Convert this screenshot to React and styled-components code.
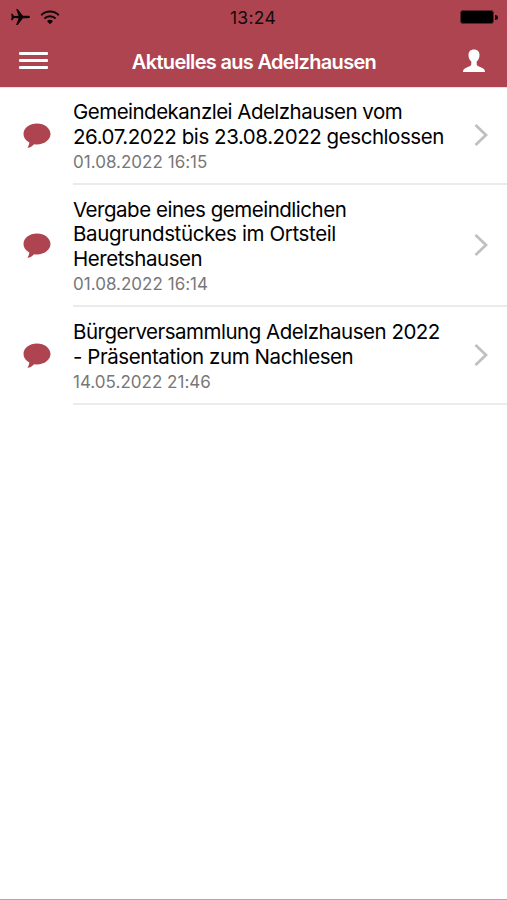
import styled, { createGlobalStyle } from "styled-components";

const news = [
  {
    lines: [
      { text: "Gemeindekanzlei Adelzhausen vom", tracking: -0.52 },
      { text: "26.07.2022 bis 23.08.2022 geschlossen", tracking: -0.44 },
    ],
    date: "01.08.2022 16:15",
  },
  {
    lines: [
      { text: "Vergabe eines gemeindlichen", tracking: -0.48 },
      { text: "Baugrundstückes im Ortsteil", tracking: -0.37 },
      { text: "Heretshausen", tracking: -0.44 },
    ],
    date: "01.08.2022 16:14",
  },
  {
    lines: [
      { text: "Bürgerversammlung Adelzhausen 2022", tracking: -0.5 },
      { text: "- Präsentation zum Nachlesen", tracking: -0.43 },
    ],
    date: "14.05.2022 21:46",
  },
];

function App() {
  return (
    <Screen>
      <GlobalStyle />
      <Header>
        <StatusBar>
          <StatusLeft>
            <svg width="20" height="18" viewBox="0 0 20 18">
              <path
                fill="#0d0607"
                d="M20 9c0-.8-1-1.200-2.300-1.200h-4.800L7.700 1H6.100l2.500 6.800-4.400.2L2.400 5.800H1.100L1.700 9l-.6 3.200h1.300L4.200 10l4.400.2L6.100 17h1.600l5.200-6.800h4.800C19 10.200 20 9.800 20 9z"
              />
            </svg>
            <svg width="20" height="15" viewBox="0 0 20 15" fill="none" stroke="#0d0607" strokeWidth="2">
              <path d="M1.200 5.200a12.600 12.600 0 0 1 17.600 0M4.400 8.500a8 8 0 0 1 11.200 0" />
              <path fill="#0d0607" stroke="none" d="M7 11.200a4.300 4.300 0 0 1 6 0L10 14.300z" />
            </svg>
          </StatusLeft>
          <Clock>13:24</Clock>
          <Battery>
            <BatteryBody />
            <BatteryTip />
          </Battery>
        </StatusBar>
        <NavBar>
          <Burger>
            <i />
            <i />
            <i />
          </Burger>
          <Title>Aktuelles aus Adelzhausen</Title>
          <svg width="24" height="24" viewBox="0 0 24 24">
            <path
              fill="#fff"
              d="M12 .5c-3.400 0-5.500 2.200-5.500 5.500 0 2.800 1 5.100 2.800 6.600v3c-.4 1.500-2.200 2.200-4.500 2.900C2.300 19.400 1 20.500 1 23h22c0-2.500-1.300-3.600-3.800-4.500-2.300-.7-4.100-1.400-4.500-2.900v-3c1.800-1.500 2.800-3.800 2.800-6.600C17.500 2.700 15.400.5 12 .5z"
            />
          </svg>
        </NavBar>
      </Header>
      <List>
        {news.map((item) => (
          <Row key={item.date}>
            <Bubble viewBox="0 0 28 26">
              <path
                fill="#ae4450"
                d="M14 .5C6.500.5.500 5 .500 11c0 3.500 2 6.600 5.800 8.500-.1 2-.8 3.700-1.900 5.300 2.700-.4 5-1.600 6.700-3.600 1 .1 1.900.2 2.900.2 7.500 0 13.500-4.600 13.500-10.400S21.500.5 14 .5z"
              />
            </Bubble>
            <Body>
              <Text>
                {item.lines.map((line) => (
                  <Line key={line.text} $tracking={line.tracking}>
                    {line.text}
                  </Line>
                ))}
                <Timestamp>{item.date}</Timestamp>
              </Text>
              <Chevron viewBox="0 0 14 22">
                <path fill="none" stroke="#c0c0c2" strokeWidth="2.800" d="M1.500 1 12 11 1.500 21" />
              </Chevron>
            </Body>
          </Row>
        ))}
      </List>
      <BottomEdge />
    </Screen>
  );
}

export default App;

const GlobalStyle = createGlobalStyle`
  body {
    margin: 0;
    font-family: Inter, "Liberation Sans", sans-serif;
  }
  * {
    box-sizing: border-box;
  }
  svg {
    display: block;
    flex: none;
  }
`;

const Screen = styled.div`
  height: 900px;
  display: flex;
  flex-direction: column;
  background: #fff;
`;

const Header = styled.header`
  height: 87px;
  flex: none;
  background: #ae4450;
  box-shadow: 0 1px 0 #f5dcdd;
`;

const StatusBar = styled.div`
  height: 34px;
  display: grid;
  grid-template-columns: 1fr auto 1fr;
  align-items: center;
  padding: 0 10px 0 9px;
`;

const StatusLeft = styled.div`
  display: flex;
  align-items: center;
  gap: 10px;
  padding-left: 1px;
`;

const Clock = styled.span`
  padding-top: 1px;
  font-size: 17.5px;
  letter-spacing: 0.3px;
  color: #170a0c;
`;

const Battery = styled.div`
  justify-self: end;
  display: flex;
  align-items: center;
  gap: 1px;
  margin-right: -1px;
`;

const BatteryBody = styled.div`
  width: 34px;
  height: 14px;
  border: 1px solid #5c242b;
  border-radius: 3px;
  background: #000;
`;

const BatteryTip = styled.div`
  width: 3px;
  height: 5px;
  border-radius: 0 3px 3px 0;
  background: #1c0b0d;
`;

const NavBar = styled.div`
  height: 53px;
  display: flex;
  align-items: center;
  justify-content: space-between;
  padding: 0 21px 0 19px;
`;

const Burger = styled.div`
  width: 29px;
  display: flex;
  flex-direction: column;
  gap: 4.5px;

  i {
    height: 2.5px;
    border-radius: 1px;
    background: #fff;
  }
`;

const Title = styled.h1`
  margin: 2px 2px 0 0;
  font-size: 20px;
  font-weight: 600;
  letter-spacing: -0.68px;
  color: #fff;
`;

const List = styled.main`
  flex: 1;
`;

const Row = styled.article`
  display: flex;
  align-items: center;
  padding-left: 23px;
`;

const Bubble = styled.svg`
  width: 28px;
  height: 26px;
  margin-right: 22px;
`;

const Body = styled.div`
  flex: 1;
  display: flex;
  align-items: center;
  justify-content: space-between;
  padding: 13.3px 19px 8.4px 0;
  border-bottom: 2px solid #ebebec;
`;

const Text = styled.div`
  display: flex;
  flex-direction: column;
`;

const Line = styled.span`
  font-size: 20.5px;
  line-height: 24.5px;
  letter-spacing: ${(p) => p.$tracking}px;
  white-space: nowrap;
`;

const Timestamp = styled.time`
  padding-top: 1px;
  font-size: 17px;
  line-height: 24px;
  letter-spacing: 0.02px;
  color: #77777a;
  white-space: nowrap;
`;

const Chevron = styled.svg`
  width: 14px;
  height: 22px;
  margin-top: -4px;
`;

const BottomEdge = styled.div`
  height: 1px;
  background: #cf97a3;
`;
